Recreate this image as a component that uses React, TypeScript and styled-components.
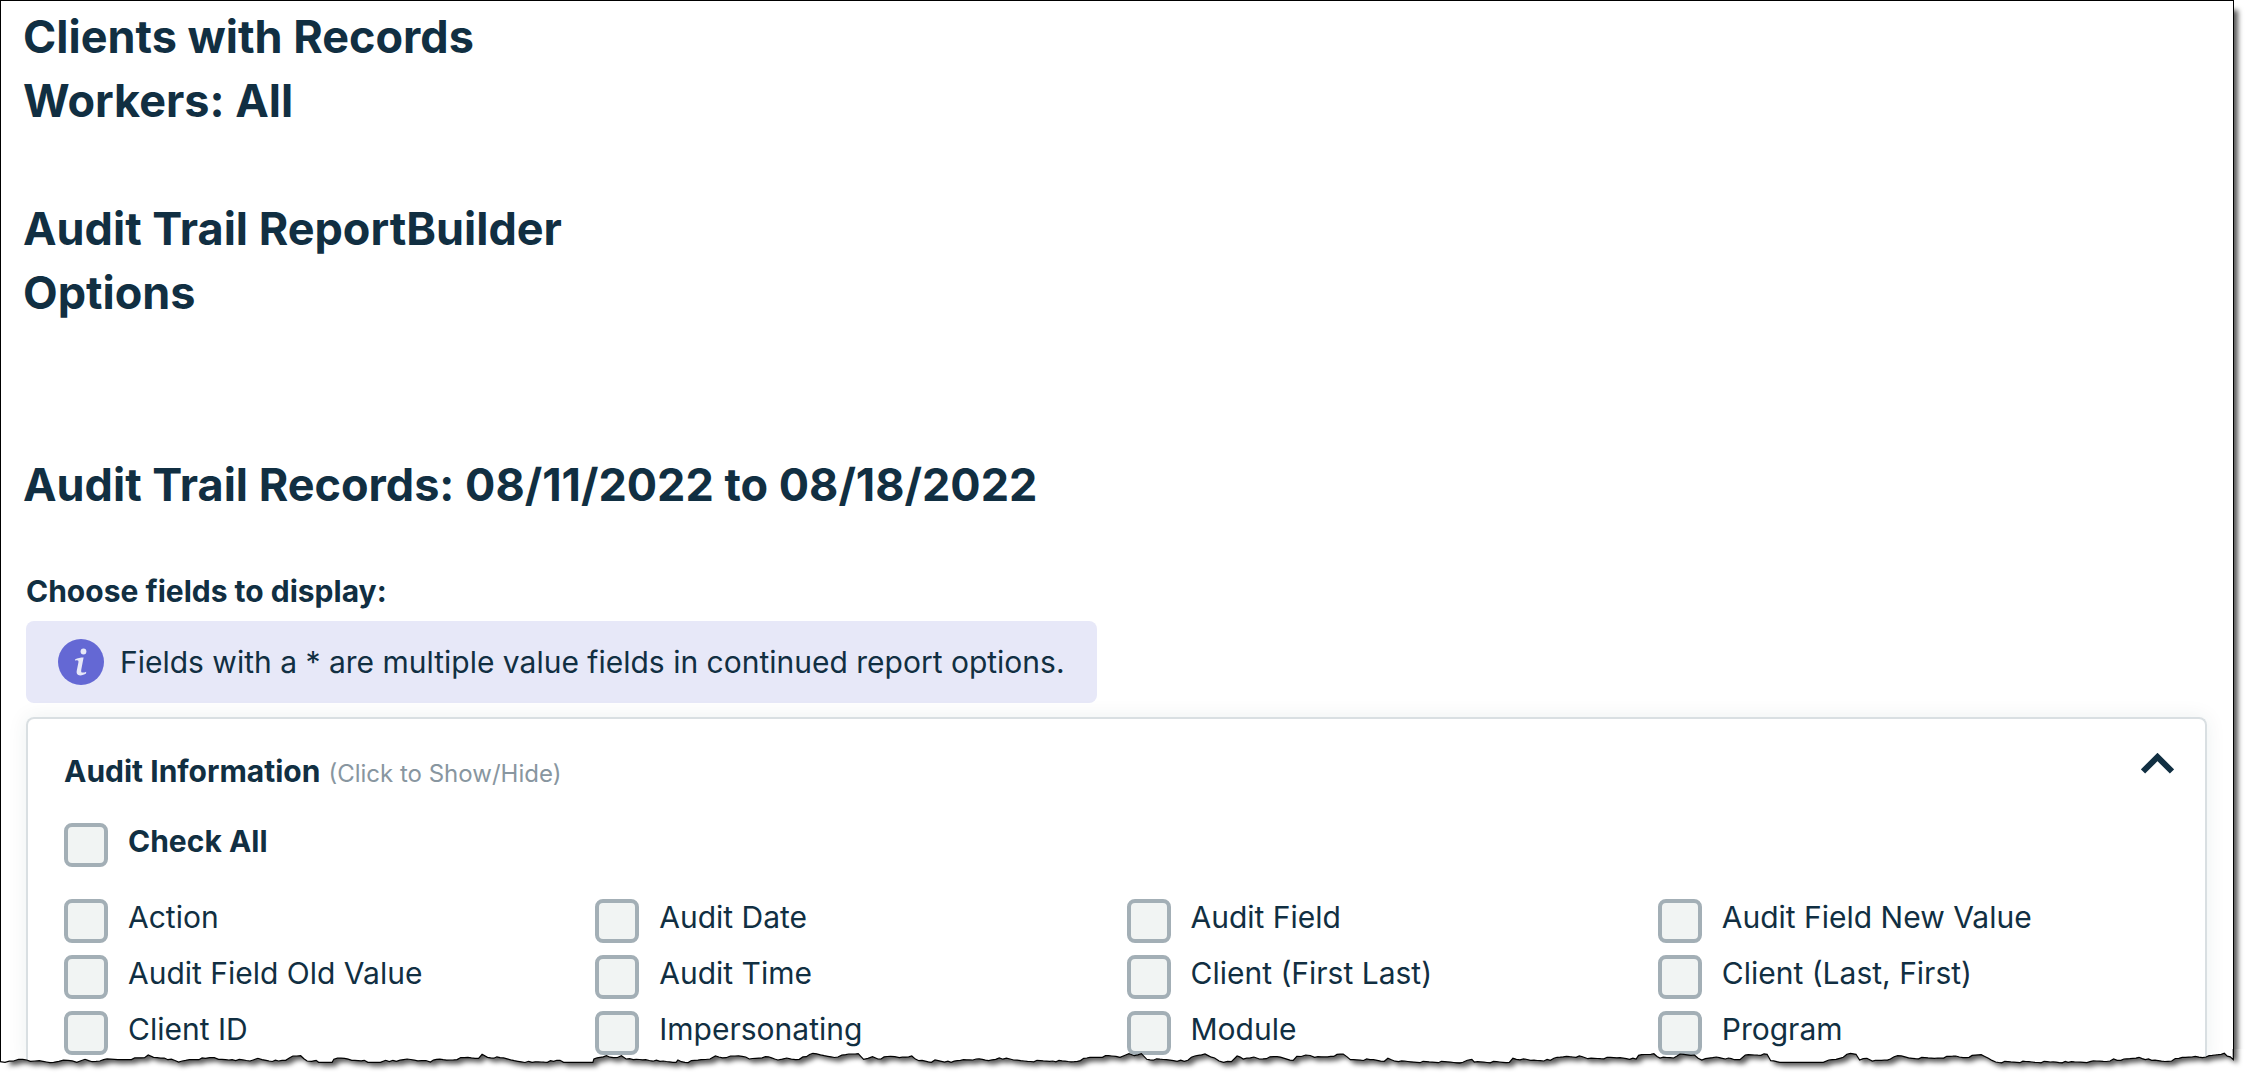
import React, { useState } from "react";
import styled, { createGlobalStyle } from "styled-components";

const color = {
  ink: "#112f42",
  muted: "#8896a0",
  line: "#d9dfe2",
  boxLine: "#a3afb6",
  boxFill: "#f1f4f3",
  infoFill: "#e7e8f8",
  info: "#6468d4",
};

const GlobalStyle = createGlobalStyle`
  *, *::before, *::after { box-sizing: border-box; }
  body {
    margin: 0;
    background: #fff;
    color: ${color.ink};
    font-family: Inter, "Liberation Sans", sans-serif;
    font-size: 30px;
    line-height: 36px;
  }
`;

const Page = styled.div`
  position: relative;
  padding: 0 15px 16px 0;
  overflow: hidden;
`;

const Sheet = styled.main`
  padding: 4px 26px 7px 22px;
  border: 1px solid #000;
  border-bottom: 0;
  background: #fff;
  box-shadow: 4px 10px 5px rgba(0, 0, 0, 0.65);
`;

const Heading = styled.h1<{ $space?: number }>`
  margin: 0 0 ${(p) => p.$space ?? 0}px;
  font-size: 45px;
  font-weight: 700;
  line-height: 64px;
`;

const Fields = styled.section`
  margin-left: 3px;
`;

const Prompt = styled.h2`
  margin: 0 0 12px;
  font-size: 30px;
  font-weight: 700;
`;

const Notice = styled.p`
  display: flex;
  align-items: center;
  gap: 16px;
  width: fit-content;
  min-height: 82px;
  margin: 0 0 14px;
  padding: 16px 32px;
  border-radius: 8px;
  background: ${color.infoFill};
`;

const Card = styled.section`
  padding: 34px 16px 7px 36px;
  margin-bottom: -7px;
  border: 2px solid ${color.line};
  border-bottom: 0;
  border-radius: 8px 8px 0 0;
  box-shadow: 0 0 20px rgba(17, 60, 66, 0.08);
`;

const CardToggle = styled.button`
  display: flex;
  justify-content: space-between;
  align-items: flex-start;
  width: 100%;
  height: 36px;
  margin: 0 0 34px;
  padding: 0 15px 0 0;
  border: 0;
  background: none;
  color: inherit;
  font: inherit;
  text-align: left;
  cursor: pointer;
`;

const CardLabel = styled.span`
  display: flex;
  align-items: baseline;
  gap: 8px;
`;

const CardTitle = styled.span`
  font-weight: 700;
`;

const Hint = styled.small`
  color: ${color.muted};
  font-size: 24px;
  font-weight: 400;
`;

const FieldGrid = styled.div`
  display: grid;
  grid-template-columns: repeat(4, 1fr);
  row-gap: 12px;
  margin-top: 32px;
`;

const Option = styled.label<{ $strong?: boolean }>`
  display: flex;
  align-items: flex-start;
  gap: 20px;
  min-height: 44px;
  font-weight: ${(p) => (p.$strong ? 700 : 400)};
`;

const Tick = styled.input`
  appearance: none;
  flex: none;
  width: 44px;
  height: 44px;
  margin: 0;
  border: 4px solid ${color.boxLine};
  border-radius: 8px;
  background: ${color.boxFill};

  &:checked {
    background: ${color.info};
  }
`;

const TornEdge = styled.svg`
  position: absolute;
  left: 0;
  bottom: 0;
  width: 100%;
  height: 29px;
  pointer-events: none;
`;

const InfoIcon = () => (
  <svg width="46" height="46" viewBox="0 0 46 46" aria-hidden="true">
    <circle cx="23" cy="23" r="23" fill={color.info} />
    <circle cx="25.5" cy="12.5" r="2.9" fill={color.infoFill} />
    <path
      d="M17 20.4C19.6 19 22.6 18.6 25.6 18.6L23.3 30.4C22.9 32.6 23.3 33.6 24.6 33.6C25.8 33.6 27 33.3 28.2 32.7L28 34.6C26.4 35.8 24.4 36.4 22.2 36.4C19.2 36.4 18.2 34.6 18.8 31.6L20.4 23.4C20.7 21.8 20.2 21.1 18.8 21.2L17 21.4Z"
      fill={color.infoFill}
    />
  </svg>
);

const Chevron = ({ open }: { open: boolean }) => (
  <svg width="33" height="21" viewBox="0 0 33 21" aria-hidden="true">
    <path
      d={open ? "M2 18.5L16.5 4L31 18.5" : "M2 2.5L16.5 17L31 2.5"}
      fill="none"
      stroke={color.ink}
      strokeWidth="6"
    />
  </svg>
);

/* Vertices of the ragged edge, drawn in four strips across the sheet. */
const strips: { from: number; unit: number; points: string }[] = [
  {
    from: 0,
    unit: 2.8,
    points:
      "0,188 14,190 38,186 52,181 75,183 85,187 110,185 150,190 165,187 190,184 215,190 238,181 258,188 290,182 340,182 405,176 415,168 430,175 460,177 500,189 530,182 575,178 600,176 612,181 650,182 700,186 722,178 745,184 780,186 800,184 820,171 842,170 860,186 885,184 892,190 930,190 935,181 965,178 985,184 1020,184 1030,190 1065,190 1080,184 1110,187 1140,180 1180,185 1205,189 1222,181 1260,183 1300,176 1340,178 1350,166 1365,175 1400,176 1440,185 1490,190 1550,187",
  },
  {
    from: 560,
    unit: 2.8,
    points:
      "0,184 10,190 92,190 95,180 130,170 150,176 172,170 185,180 205,182 240,182 280,187 325,190 330,183 350,190 395,182 420,180 435,171 465,176 490,171 520,174 530,180 575,173 610,183 635,177 660,182 690,173 708,163 740,170 778,174 800,167 835,164 850,181 875,173 890,180 925,172 950,176 985,171 1005,185 1040,190 1050,183 1095,190 1130,182 1165,180 1200,185 1230,177 1270,183 1300,186 1380,186 1440,188 1475,177 1545,171",
  },
  {
    from: 1120,
    unit: 2.8,
    points:
      "0,175 25,164 40,170 60,164 75,181 130,182 180,187 190,184 200,175 238,165 265,177 290,190 312,188 328,171 345,180 375,174 390,180 440,173 485,184 495,172 520,168 545,175 590,172 625,165 645,182 700,182 740,187 750,178 780,188 960,190 985,181 992,189 1090,190 1100,178 1150,184 1205,184 1215,178 1250,172 1295,173 1310,179 1400,176 1445,180 1452,169 1495,164 1512,177 1550,177 1560,171",
  },
  {
    from: 1680,
    unit: 2.756,
    points:
      "0,165 40,168 60,183 100,174 150,182 165,182 180,168 240,166 250,185 275,190 395,190 410,183 440,178 470,163 485,166 495,183 515,178 530,186 580,180 600,170 640,178 710,177 760,171 780,176 830,167 850,178 870,189 1020,189 1070,190 1130,188 1185,186 1195,180 1215,184 1265,175 1300,184 1345,187 1375,178 1420,172 1450,174 1500,163 1525,182",
  },
];

const vertices = strips.flatMap(({ from, unit, points }) =>
  points.split(" ").map((pair) => {
    const [x, y] = pair.split(",").map(Number);
    return [from + x / unit, y / 3 - 50] as const;
  }),
);

/* Small steps between the vertices give the paper its rough grain. */
const roughen = () => {
  const out: string[] = [];
  let n = 0;
  vertices.forEach(([x, y], i) => {
    out.push(`${x.toFixed(1)} ${y.toFixed(1)}`);
    const next = vertices[i + 1];
    if (!next || (y > 13 && next[1] > 13)) return;
    const steps = Math.floor((next[0] - x) / 3);
    for (let s = 1; s < steps; s++) {
      const t = s / steps;
      n += 1;
      const grain = (((n * 7919) % 13) / 12 - 0.5) * 1.6;
      out.push(
        `${(x + (next[0] - x) * t).toFixed(1)} ${(y + (next[1] - y) * t + grain).toFixed(1)}`,
      );
    }
  });
  return out.join("L");
};

const tear = roughen();

const Tear = () => (
  <TornEdge viewBox="0 0 2249 29" preserveAspectRatio="none" aria-hidden="true">
    <defs>
      <clipPath id="below-tear">
        <path d={`M${tear}L2234 0H2249V29H0Z`} />
      </clipPath>
      <filter id="soft" x="-1%" y="-50%" width="102%" height="200%">
        <feGaussianBlur stdDeviation="2.5" />
      </filter>
    </defs>
    <g clipPath="url(#below-tear)">
      <rect width="2249" height="29" fill="#fff" />
      <path
        d={`M${tear}L2234 -40H6V13Z`}
        transform="translate(4 4)"
        fill="#000"
        fillOpacity="0.65"
        filter="url(#soft)"
      />
    </g>
    <path d={`M${tear}V0`} fill="none" stroke="#000" strokeWidth="1.2" />
  </TornEdge>
);

const fields = [
  "Action",
  "Audit Date",
  "Audit Field",
  "Audit Field New Value",
  "Audit Field Old Value",
  "Audit Time",
  "Client (First Last)",
  "Client (Last, First)",
  "Client ID",
  "Impersonating",
  "Module",
  "Program",
];

export default function App() {
  const [open, setOpen] = useState(true);
  const [chosen, setChosen] = useState<string[]>([]);

  const toggle = (name: string) =>
    setChosen((now) => (now.includes(name) ? now.filter((f) => f !== name) : [...now, name]));

  return (
    <>
      <GlobalStyle />
      <Page>
        <Sheet>
          <Heading $space={64}>
            Clients with Records
            <br />
            Workers: All
          </Heading>
          <Heading as="h2" $space={128}>
            Audit Trail ReportBuilder
            <br />
            Options
          </Heading>
          <Heading as="h2" $space={56}>
            Audit Trail Records: 08/11/2022 to 08/18/2022
          </Heading>
          <Fields>
            <Prompt>Choose fields to display:</Prompt>
            <Notice>
              <InfoIcon />
              <span>Fields with a * are multiple value fields in continued report options.</span>
            </Notice>
            <Card>
              <CardToggle type="button" aria-expanded={open} onClick={() => setOpen(!open)}>
                <CardLabel>
                  <CardTitle>Audit Information</CardTitle>
                  <Hint>(Click to Show/Hide)</Hint>
                </CardLabel>
                <Chevron open={open} />
              </CardToggle>
              {open && (
                <>
                  <Option $strong>
                    <Tick
                      type="checkbox"
                      checked={chosen.length === fields.length}
                      onChange={(e) => setChosen(e.target.checked ? fields : [])}
                    />
                    Check All
                  </Option>
                  <FieldGrid>
                    {fields.map((name) => (
                      <Option key={name}>
                        <Tick
                          type="checkbox"
                          checked={chosen.includes(name)}
                          onChange={() => toggle(name)}
                        />
                        {name}
                      </Option>
                    ))}
                  </FieldGrid>
                </>
              )}
            </Card>
          </Fields>
        </Sheet>
        <Tear />
      </Page>
    </>
  );
}
